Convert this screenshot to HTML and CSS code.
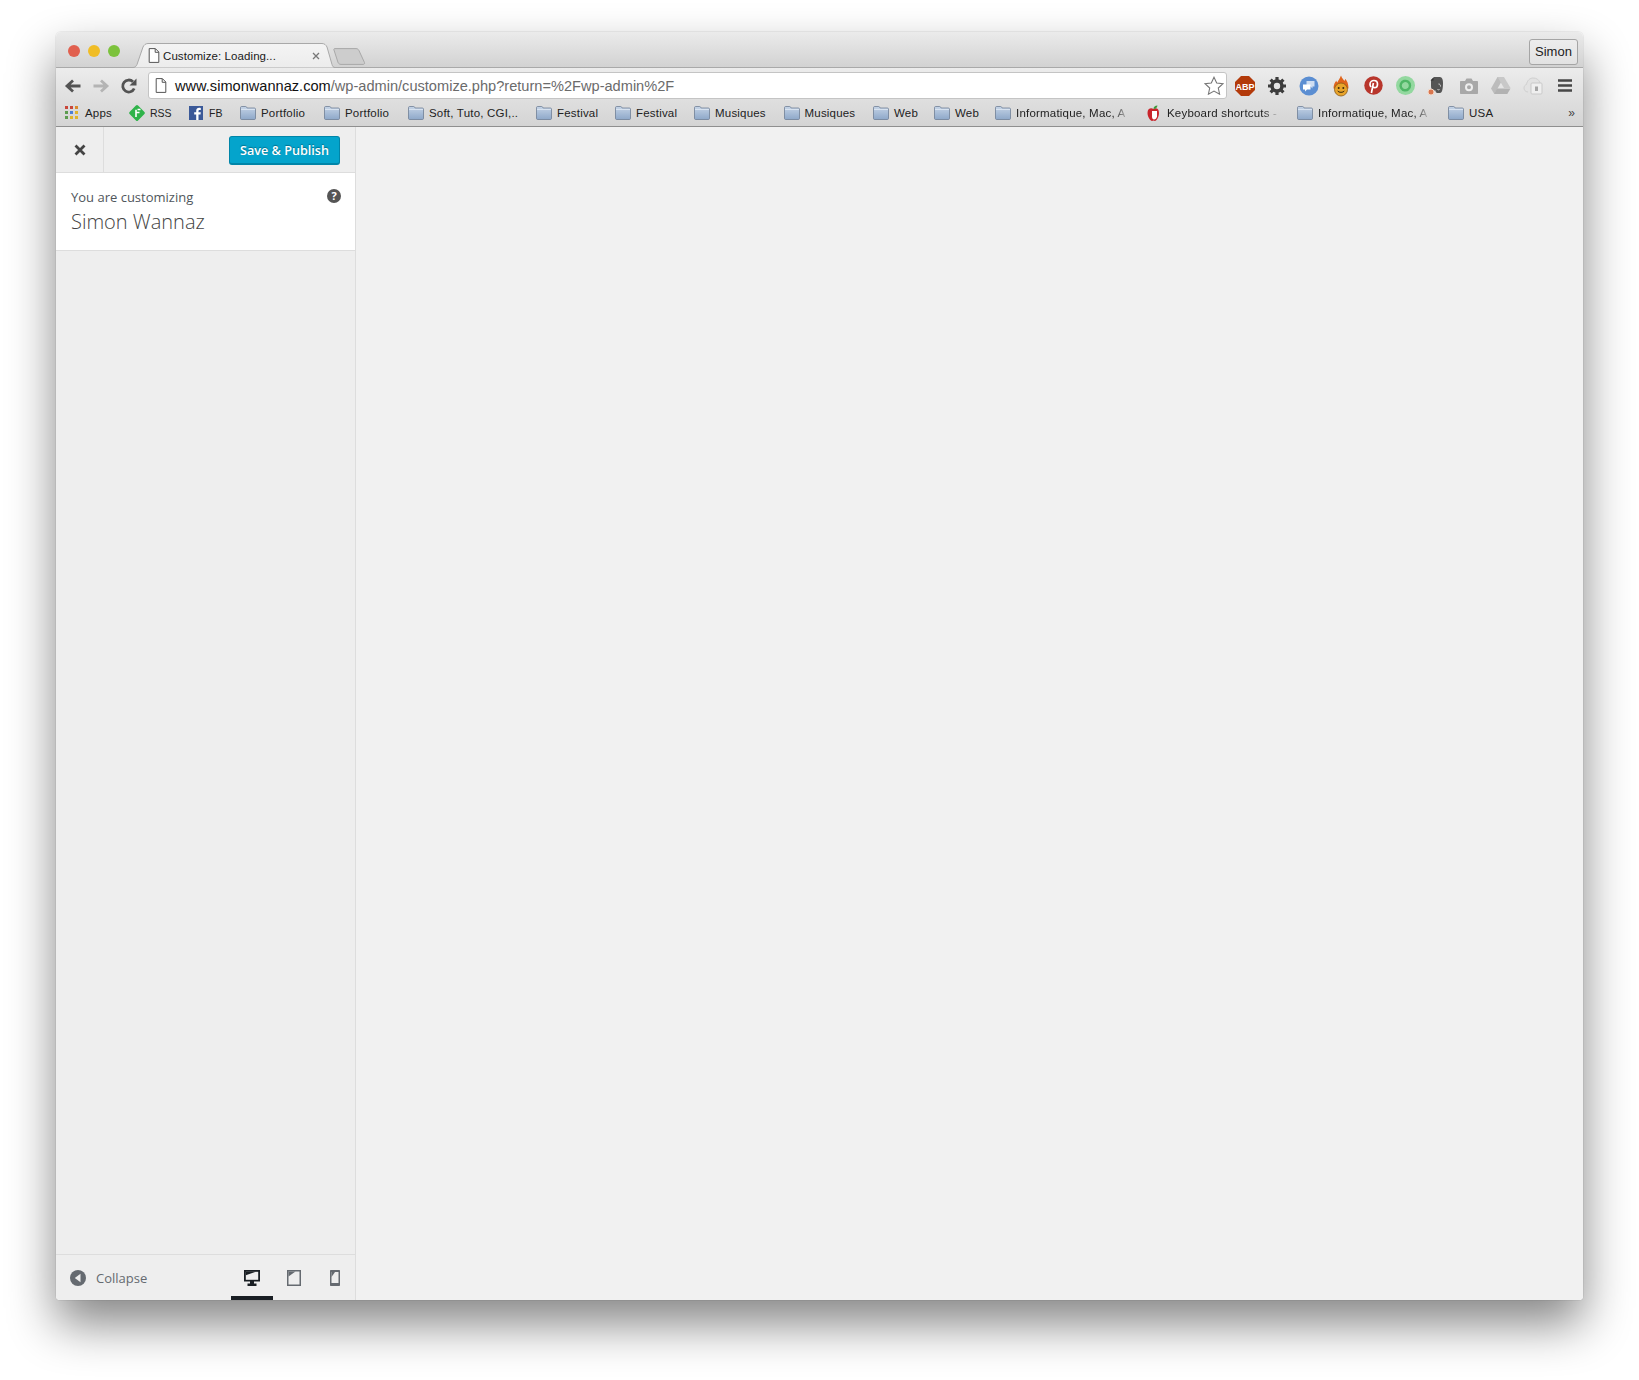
FILE: index.html
```html
<!DOCTYPE html>
<html lang="en">
<head>
<meta charset="utf-8">
<title>Customize: Loading...</title>
<link rel="stylesheet" href="styles.css">
</head>
<body>
<svg class="defs" width="0" height="0" aria-hidden="true">
  <defs>
    <linearGradient id="fg" x1="0" y1="0" x2="0" y2="1"><stop offset="0" stop-color="#c4d3e6"/><stop offset="1" stop-color="#8ea8c9"/></linearGradient>
    <linearGradient id="tabfill" x1="0" y1="0" x2="0" y2="1"><stop offset="0" stop-color="#f4f4f4"/><stop offset="1" stop-color="#ececec"/></linearGradient>
    <symbol id="folder" viewBox="0 0 16 14">
      <path d="M.5 3V1.600C.5 1 1 .5 1.600.5h4c.5 0 .8.200 1 .6l.5.9h7.300c.6 0 1.100.5 1.100 1.100v9.300c0 .6-.5 1.100-1.100 1.100H1.600c-.6 0-1.100-.5-1.100-1.100z" fill="url(#fg)" stroke="#6f7f95" stroke-width=".8"/>
      <path d="M1 3.400h14" stroke="#e6edf6" stroke-width=".8"/>
    </symbol>
    <symbol id="page" viewBox="0 0 12 15">
      <path d="M1.200.6h6.200l3.400 3.400v10.400H1.200z" fill="#fff" stroke="#555" stroke-width="1"/>
      <path d="M7.200.8v3.500h3.500" fill="none" stroke="#555" stroke-width="1"/>
    </symbol>
  </defs>
</svg>
<main class="window">
  <header class="tabbar">
    <div class="lights">
      <span class="light light-red"></span>
      <span class="light light-yellow"></span>
      <span class="light light-green"></span>
    </div>
    <div class="tab">
      <svg class="tab-shape" viewBox="0 0 204 25" preserveAspectRatio="none" aria-hidden="true"><path d="M0 24.500h1c2 0 3-1 4-3L11 4c1-2 2.500-3.500 5-3.500h174c2.500 0 4 1.500 5 3.500l5 17.500c.5 2 1.500 3 3 3h1" fill="url(#tabfill)" stroke="#a9a9a9"/></svg>
      <svg class="tab-page" width="12" height="15"><use href="#page"/></svg>
      <span class="tab-title">Customize: Loading...</span>
      <svg class="tab-close" width="8" height="8" viewBox="0 0 8 8" aria-hidden="true"><path d="M1 1l6 6M7 1L1 7" stroke="#777" stroke-width="1.300"/></svg>
    </div>
    <svg class="newtab" width="33" height="17" viewBox="0 0 33 17" aria-hidden="true"><path d="M.8 1.500C.8 1 1.300.6 2 .6h21c1.500 0 2.500.8 3 2l5.500 12c.3 1-.2 1.800-1.500 1.800H8c-1.500 0-2.500-.8-3-2z" fill="#cdcdcd" stroke="#a8a8a8"/></svg>
    <div class="tab-spacer"></div>
    <div class="profile">Simon</div>
  </header>

  <section class="toolbar">
    <div class="navrow">
      <div class="navicons">
        <svg class="nav" width="18" height="16" viewBox="0 0 18 16" aria-hidden="true"><path d="M16.500 8H4M9 2.500L3 8l6 5.500" fill="none" stroke="#535353" stroke-width="2.800"/></svg>
        <svg class="nav" width="18" height="16" viewBox="0 0 18 16" aria-hidden="true"><path d="M1.500 8H14M9 2.500L15 8l-6 5.500" fill="none" stroke="#b4b4b4" stroke-width="2.800"/></svg>
        <svg class="nav" width="18" height="18" viewBox="0 0 18 18" aria-hidden="true"><path d="M14.200 11.500A6 6 0 1 1 13 4.800" fill="none" stroke="#535353" stroke-width="2.800"/><path d="M16.500 1.500v7h-7z" fill="#535353"/></svg>
      </div>
      <div class="omnibox">
        <svg class="omni-page" width="12" height="15"><use href="#page"/></svg>
        <span class="url"><span class="url-host">www.simonwannaz.com</span>/wp-admin/customize.php?return=%2Fwp-admin%2F</span>
        <svg class="star" width="20" height="19" viewBox="0 0 20 19" aria-hidden="true"><path d="M10 1.200l2.700 5.800 6.300.7-4.700 4.300 1.300 6.200L10 15.100l-5.600 3.100 1.300-6.200L1 7.700l6.300-.7z" fill="#fff" stroke="#777" stroke-width="1.100"/></svg>
      </div>
      <div class="extensions">
        <span class="ext"><svg width="20" height="20" viewBox="0 0 20 20" aria-hidden="true"><path d="M6 0h8l6 6v8l-6 6H6l-6-6V6z" fill="#b33a0a"/><text x="10" y="13.500" class="abp">ABP</text></svg></span>
        <span class="ext"><svg width="18" height="18" viewBox="0 0 18 18" aria-hidden="true"><circle cx="9" cy="9" r="5" fill="none" stroke="#3d3d3d" stroke-width="3.600"/><path d="M9 0v4M9 14v4M0 9h4M14 9h4M2.600 2.600l2.800 2.800M12.600 12.600l2.800 2.800M15.400 2.600l-2.800 2.800M5.400 12.600l-2.800 2.800" stroke="#3d3d3d" stroke-width="3.200"/></svg></span>
        <span class="ext"><svg width="20" height="20" viewBox="0 0 20 20" aria-hidden="true"><circle cx="10" cy="10" r="9.500" fill="#5b8ed2"/><path d="M7.500 5h8v5.500h-2v2l-2-2H7.500z" fill="#cfdef2"/><path d="M4 8.500h7.500v5H8l-2 2v-2H4z" fill="#fff"/></svg></span>
        <span class="ext"><svg width="18" height="22" viewBox="0 0 18 22" aria-hidden="true"><path d="M9 .5c1 3 2.500 4 3.500 5.500.5-.8.6-1.500.6-2.200 2 2 3.400 5 3.400 9.700h-15c0-3.500 1.300-6.500 3-8 0 1 .2 1.500.8 2C6 5.500 8 3.500 9 .5z" fill="#e0641c"/><circle cx="9" cy="14.500" r="6.500" fill="#e8a42a" stroke="#8a5a18" stroke-width=".8"/><circle cx="6.700" cy="13" r="1" fill="#3a2a10"/><circle cx="11.300" cy="13" r="1" fill="#3a2a10"/><path d="M5.700 16c1 1.800 5.600 1.800 6.600 0" fill="none" stroke="#3a2a10" stroke-width="1"/></svg></span>
        <span class="ext"><svg width="19" height="19" viewBox="0 0 19 19" aria-hidden="true"><circle cx="9.500" cy="9.500" r="9.200" fill="#b8362c"/><path d="M7 11c-.8-1-1-1.800-1-2.800C6 6 7.800 4.500 9.900 4.500c2.200 0 3.600 1.500 3.600 3.400 0 2.200-1.300 3.800-3 3.800-.8 0-1.400-.4-1.600-.9M9.400 7l-2 10" fill="none" stroke="#fff" stroke-width="1.700"/></svg></span>
        <span class="ext"><svg width="19" height="19" viewBox="0 0 19 19" aria-hidden="true"><circle cx="9.500" cy="9.500" r="9.500" fill="#93d89f"/><path d="M12.500 13A4.700 4.700 0 1 1 14 9.500c0 1.500-.5 2.500-1.500 3.500" fill="none" stroke="#4fb666" stroke-width="2.400"/></svg></span>
        <span class="ext"><svg width="20" height="20" viewBox="2 0 20 20" aria-hidden="true"><path d="M6 4l3-3h5c2.500 0 4 1 4 6 0 6-1 10-3 10h-2.500c-1.500 0-2-1-2-2.500H8.500C7 14.500 6 13 6 10z" fill="#555"/><path d="M5.500 4.500h3V1.500z" fill="#333"/><path d="M13.500 8c1.500 0 2 1 2 2.500M12.500 13.500c.8.500 1.500.300 2 0" stroke="#ddd" fill="none"/><circle cx="6" cy="16" r="3" fill="#d9764f" stroke="#f3d9c9"/></svg></span>
        <span class="ext"><svg width="18" height="16" viewBox="0 0 18 16" aria-hidden="true"><path d="M1 3h4l1.500-2.500h5L13 3h4c.6 0 1 .4 1 1v11c0 .6-.4 1-1 1H1c-.6 0-1-.4-1-1V4c0-.6.4-1 1-1z" fill="#a8a8a8"/><circle cx="9" cy="9.300" r="3" fill="none" stroke="#eee" stroke-width="2"/></svg></span>
        <span class="ext"><svg width="20" height="17" viewBox="0 0 20 17" aria-hidden="true"><path d="M6.500 0h6.500l-6.500 11.500L3.300 17 0 11.500z" fill="#bcbcbc"/><path d="M13 0l6.500 11H13L6.600 0z" fill="#c8c8c8"/><path d="M6 11.500h13.500L16.300 17H3z" fill="#b2b2b2"/></svg></span>
        <span class="ext"><svg width="20" height="18" viewBox="0 0 20 18" aria-hidden="true"><path d="M5 15C2 15 1 12.500 1 11c0-2 1-3 2.500-3.500C4 3.500 7 1 10 1c3.500 0 6 1.500 7 5" fill="#e2e2e2" stroke="#cfcfcf"/><rect x="8" y="6" width="11" height="11" rx="1" fill="#efefef" stroke="#c9c9c9"/><rect x="12" y="9.500" width="3" height="4.500" fill="#a5a5a5"/></svg></span>
        <span class="ext"><svg width="14" height="13" viewBox="0 0 14 13" aria-hidden="true"><path d="M0 1.500h14M0 6.500h14M0 11.500h14" stroke="#474747" stroke-width="2.600"/></svg></span>
      </div>
    </div>
    <nav class="bookmarks">
      <a class="bm">
        <svg class="bm-apps" width="13" height="13" viewBox="0 0 13 13" aria-hidden="true">
          <rect width="3" height="3" fill="#c9473a"/><rect x="5" width="3" height="3" fill="#c9473a"/><rect x="10" width="3" height="3" fill="#d98a2b"/>
          <rect y="5" width="3" height="3" fill="#5d9c50"/><rect x="5" y="5" width="3" height="3" fill="#4c7fd6"/><rect x="10" y="5" width="3" height="3" fill="#e0b42c"/>
          <rect y="10" width="3" height="3" fill="#5d9c50"/><rect x="5" y="10" width="3" height="3" fill="#e0b42c"/><rect x="10" y="10" width="3" height="3" fill="#e0b42c"/>
        </svg>
        <span class="bm-label w-apps">Apps</span>
      </a>
      <a class="bm bm-rss">
        <svg width="18" height="18" viewBox="0 0 18 18" aria-hidden="true"><rect x="3" y="3" width="12" height="12" rx="1.500" transform="rotate(45 9 9)" fill="#2fb34a"/><path d="M9.500 5.500h3M8 8.500h3.500M8 5.800V13" stroke="#fff" stroke-width="1.600"/></svg>
        <span class="bm-label bm-caps w-rss">RSS</span>
      </a>
      <a class="bm bm-fb">
        <svg width="14" height="14" viewBox="0 0 14 14" aria-hidden="true"><rect width="14" height="14" fill="#3b5998"/><path d="M9.500 14V8.500h2l.3-2.200H9.500V5c0-.7.2-1.100 1.100-1.100h1.200v-2c-.6-.1-1.100-.1-1.700-.1-1.700 0-2.900 1-2.900 3v1.500H5.200v2.200h2V14z" fill="#fff"/></svg>
        <span class="bm-label bm-caps w-fb">FB</span>
      </a>
      <a class="bm"><svg class="fold" width="16" height="14"><use href="#folder"/></svg><span class="bm-label w-portfolio">Portfolio</span></a>
      <a class="bm"><svg class="fold" width="16" height="14"><use href="#folder"/></svg><span class="bm-label w-portfolio">Portfolio</span></a>
      <a class="bm"><svg class="fold" width="16" height="14"><use href="#folder"/></svg><span class="bm-label w-soft">Soft, Tuto, CGI,..</span></a>
      <a class="bm"><svg class="fold" width="16" height="14"><use href="#folder"/></svg><span class="bm-label w-festival">Festival</span></a>
      <a class="bm"><svg class="fold" width="16" height="14"><use href="#folder"/></svg><span class="bm-label w-festival">Festival</span></a>
      <a class="bm"><svg class="fold" width="16" height="14"><use href="#folder"/></svg><span class="bm-label w-musiques">Musiques</span></a>
      <a class="bm"><svg class="fold" width="16" height="14"><use href="#folder"/></svg><span class="bm-label w-musiques">Musiques</span></a>
      <a class="bm"><svg class="fold" width="16" height="14"><use href="#folder"/></svg><span class="bm-label w-web">Web</span></a>
      <a class="bm"><svg class="fold" width="16" height="14"><use href="#folder"/></svg><span class="bm-label w-web">Web</span></a>
      <a class="bm"><svg class="fold" width="16" height="14"><use href="#folder"/></svg><span class="bm-label bm-fade">Informatique, Mac, A</span></a>
      <a class="bm bm-apple">
        <svg width="15" height="16" viewBox="0 0 15 16" aria-hidden="true"><path d="M7.500 4C5 2.500 1.500 3.500 1.500 8c0 4 3 8 4.500 8 .7 0 1-.4 1.500-.4s.8.4 1.500.4c1.500 0 4-4 4-8 0-4.500-3-5.500-5.500-4z" fill="#c9242b"/><path d="M6 6h5v5.500c-.5 1.800-1.500 3-3 3-1.200 0-2-1.200-2-3z" fill="#fff"/><path d="M7.500 4c0-2 1.500-3.500 4-3.500C11 2.500 10 4 7.500 4z" fill="#3d9a3d"/></svg>
        <span class="bm-label bm-fade bm-fade-short">Keyboard shortcuts -</span>
      </a>
      <a class="bm"><svg class="fold" width="16" height="14"><use href="#folder"/></svg><span class="bm-label bm-fade bm-fade-short">Informatique, Mac, A</span></a>
      <a class="bm"><svg class="fold" width="16" height="14"><use href="#folder"/></svg><span class="bm-label">USA</span></a>
      <span class="bm-more">»</span>
    </nav>
  </section>

  <div class="content">
    <aside class="sidebar">
      <div class="side-head">
        <div class="side-close"><svg width="12" height="12" viewBox="0 0 12 12" aria-hidden="true"><path d="M1.500 1.500l9 9M10.500 1.500l-9 9" stroke="#444" stroke-width="2.800"/></svg></div>
        <button class="publish">Save &amp; Publish</button>
      </div>
      <div class="side-info">
        <div class="info-text">
          <div class="info-action">You are customizing</div>
          <div class="info-title">Simon Wannaz</div>
        </div>
        <svg class="help" width="14" height="14" viewBox="0 0 14 14" aria-hidden="true"><circle cx="7" cy="7" r="7" fill="#555"/><text x="7" y="11" class="help-q">?</text></svg>
      </div>
      <div class="side-fill"></div>
      <div class="side-foot">
        <div class="collapse">
          <svg width="16" height="16" viewBox="0 0 16 16" aria-hidden="true"><circle cx="8" cy="8" r="8" fill="#656a70"/><path d="M10.500 3.800v8.400L4.800 8z" fill="#eee"/></svg>
          <span>Collapse</span>
        </div>
        <div class="devices">
          <span class="device device-on"><svg width="16" height="16" viewBox="0 0 16 16" aria-hidden="true"><path d="M0 0h16v11.500H10v2h2.500V16h-9v-2.500H6v-2H0z" fill="#191e23"/><path d="M1.800 1.800h12.400v8H1.800z" fill="#eee"/><path d="M1.800 1.800h10l-10 3.500z" fill="#191e23"/></svg></span>
          <span class="device"><svg width="14" height="16" viewBox="0 0 14 16" aria-hidden="true"><path d="M0 0h14v16H0z" fill="#656a70"/><path d="M1.500 1.500h11v13h-11z" fill="#eee"/><path d="M1.500 1.500h7l-7 5z" fill="#656a70"/></svg></span>
          <span class="device device-last"><svg width="10" height="16" viewBox="0 0 10 16" aria-hidden="true"><path d="M1 0h8c.6 0 1 .4 1 1v14c0 .6-.4 1-1 1H1c-.6 0-1-.4-1-1V1c0-.6.4-1 1-1z" fill="#656a70"/><path d="M1.500 2h7v11h-7z" fill="#eee"/><path d="M1.500 2h3.500l-3.500 5z" fill="#656a70"/></svg></span>
        </div>
      </div>
    </aside>
    <div class="preview"></div>
  </div>
</main>
</body>
</html>
```
FILE: styles.css
```css
* { box-sizing: border-box; }
html, body { margin: 0; background: #fff; }
body { padding: 32px 56px 80px; height: 1380px; overflow: hidden; }
.defs { position: absolute; }

.window {
  width: 1527px;
  height: 1268px;
  display: flex;
  flex-direction: column;
  border-radius: 5px 5px 4px 4px;
  overflow: clip;
  box-shadow: 0 24px 48px rgba(0, 0, 0, .48), 0 0 0 1px rgba(0, 0, 0, .05);
  font-family: "Liberation Sans", sans-serif;
}

/* title / tab strip */
.tabbar {
  height: 36px;
  flex: none;
  display: flex;
  align-items: flex-end;
  background: linear-gradient(#ebebeb, #d2d2d2);
  border-bottom: 1px solid #a9a9a9;
  padding-left: 12px;
  padding-right: 5px;
}
.lights { display: flex; gap: 8px; align-self: flex-start; padding-top: 13px; width: 64px; }
.light { width: 12px; height: 12px; border-radius: 50%; }
.light-red { background: #e1604f; }
.light-yellow { background: #f0bd26; }
.light-green { background: #7cc23c; }

.tab {
  position: relative;
  width: 204px;
  height: 25px;
  margin-bottom: -1px;
  display: flex;
  align-items: center;
  padding-left: 16px;
  flex: none;
}
.tab-shape { position: absolute; inset: 0; width: 100%; height: 100%; }
.tab-page { position: relative; margin-right: 3px; }
.tab-title { position: relative; font-size: 11.500px; color: #1a1a1a; width: 149px; white-space: nowrap; letter-spacing: .08px; }
.tab-close { position: relative; }
.newtab { flex: none; margin: 0 0 2px -3px; }
.tab-spacer { flex: 1; }
.profile {
  align-self: flex-start;
  margin-top: 7px;
  width: 49px;
  height: 26px;
  border: 1px solid #a5a5a5;
  border-radius: 3px;
  font-size: 13px;
  line-height: 24px;
  text-align: center;
  color: #222;
  background: linear-gradient(#ededed, #e2e2e2);
}

/* toolbar */
.toolbar {
  height: 59px;
  flex: none;
  background: linear-gradient(#ececec, #d4d4d4);
  border-bottom: 1px solid #8f8f8f;
  display: flex;
  flex-direction: column;
}
.navrow { height: 31px; flex: none; display: flex; align-items: center; padding-top: 4px; }
.navicons { width: 92px; display: flex; align-items: center; padding-left: 8px; gap: 10px; flex: none; }
.omnibox {
  width: 1079px;
  height: 27px;
  flex: none;
  display: flex;
  align-items: center;
  background: #fff;
  border: 1px solid #c4c4c4;
  border-radius: 3px;
  padding: 0 2px 0 6px;
}
.omni-page { flex: none; }
.url { margin-left: 8px; font-size: 14.600px; color: #6b6b6b; white-space: nowrap; flex: 1; }
.url-host { color: #111; }
.star { flex: none; }
.extensions { display: flex; align-items: center; margin-left: 2px; }
.ext { width: 32px; height: 26px; display: flex; align-items: center; justify-content: center; }
.abp { font: bold 9px "Liberation Sans", sans-serif; fill: #fff; text-anchor: middle; }

/* bookmarks */
.bookmarks {
  flex: 1;
  display: flex;
  align-items: center;
  padding-left: 9px;
  gap: 17px;
  font-size: 11.500px;
  color: #222;
  white-space: nowrap;
}
.bm { display: flex; align-items: center; gap: 5px; flex: none; }
.bm-rss { margin-left: -1px; gap: 4px; }
.bm-fb { gap: 6px; }
.bm-apple { margin-left: -1px; gap: 6px; }
.bm-apps { margin-right: 2px; }
.bm-label { letter-spacing: .2px; }
.bm-caps { font-size: 10.500px; letter-spacing: 0; }
.bm svg { flex: none; }
.w-apps { width: 27px; }
.w-rss { width: 22px; }
.w-fb { width: 14px; }
.w-portfolio { width: 46px; }
.w-soft { width: 90px; }
.w-festival { width: 41px; }
.w-musiques { width: 51.500px; }
.w-web { width: 23px; }
.bm-fade {
  width: 114px;
  -webkit-mask-image: linear-gradient(90deg, #000 85%, transparent);
  mask-image: linear-gradient(90deg, #000 85%, transparent);
}
.bm-fade-short { width: 113px; }
.bm-more { margin-left: auto; margin-right: 8px; font-size: 12px; color: #444; }

/* customizer */
.content { flex: 1; display: flex; min-height: 0; }
.sidebar {
  width: 300px;
  flex: none;
  display: flex;
  flex-direction: column;
  background: #eee;
  border-right: 1px solid #ddd;
  font-family: "Open Sans", sans-serif;
}
.side-head {
  height: 46px;
  flex: none;
  display: flex;
  align-items: center;
  justify-content: space-between;
  border-bottom: 1px solid #ddd;
  padding-right: 15px;
}
.side-close {
  width: 48px;
  height: 45px;
  display: flex;
  align-items: center;
  justify-content: center;
  border-right: 1px solid #ddd;
}
.publish {
  width: 111px;
  height: 29px;
  margin-top: 1px;
  padding: 1px 0 0;
  background: #04a4cc;
  border: 1px solid #0085a8;
  border-bottom-width: 2px;
  border-radius: 3px;
  color: #fff;
  font: 600 12.600px "Open Sans", sans-serif;
  text-shadow: 0 -1px 1px #006f8c;
}
.side-info {
  height: 78px;
  flex: none;
  background: #fff;
  border-bottom: 1px solid #ddd;
  display: flex;
  justify-content: space-between;
  padding: 14px 14px 0 15px;
}
.info-action { font-size: 13px; line-height: 20px; color: #50565c; }
.info-title { font-size: 20px; font-weight: 300; line-height: 30px; color: #444; }
.help { margin-top: 2px; }
.help-q { font: bold 11px "Open Sans", sans-serif; fill: #fff; text-anchor: middle; }
.side-fill { flex: 1; }
.side-foot {
  height: 46px;
  flex: none;
  border-top: 1px solid #ddd;
  display: flex;
  align-items: stretch;
  justify-content: space-between;
}
.collapse { display: flex; align-items: center; gap: 10px; padding-left: 14px; font-size: 13px; color: #656a70; }
.devices { display: flex; }
.device {
  width: 42px;
  display: flex;
  align-items: center;
  justify-content: center;
  padding-top: 4px;
  border-bottom: 4px solid transparent;
}
.device-last { width: 40px; }
.device-on { border-bottom-color: #191e23; }
.preview { flex: 1; background: #f1f1f1; }
```
